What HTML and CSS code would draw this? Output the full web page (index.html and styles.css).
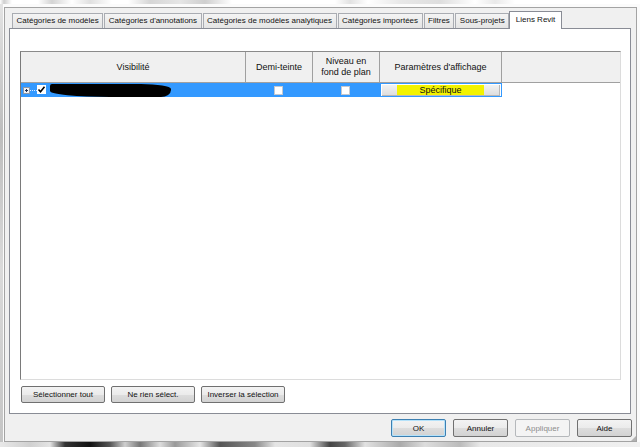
FILE: index.html
```html
<!DOCTYPE html>
<html lang="fr">
<head>
    <meta charset="UTF-8">
    <title>Visibilité/Graphismes - Liens Revit</title>
    <link rel="stylesheet" href="styles.css">
</head>
<body>
    <div class="backdrop-top"></div>

    <div class="dialog">
        <div class="tabs">
            <div class="tab">Catégories de modèles</div>
            <div class="tab">Catégories d'annotations</div>
            <div class="tab">Catégories de modèles analytiques</div>
            <div class="tab">Catégories importées</div>
            <div class="tab">Filtres</div>
            <div class="tab">Sous-projets</div>
            <div class="tab active">Liens Revit</div>
        </div>

        <div class="tab-panel">
            <div class="grid">
                <div class="grid-head">
                    <div class="hcell">Visibilité</div>
                    <div class="hcell">Demi-teinte</div>
                    <div class="hcell">Niveau en<br>fond de plan</div>
                    <div class="hcell">Paramètres d'affichage</div>
                    <div class="hcell last"></div>
                </div>
                <div class="grid-row">
                    <div class="cell cell-name selected">
                        <svg class="expander" width="7" height="7" viewBox="0 0 7 7">
                            <rect x="0.5" y="0.5" width="6" height="6" fill="#eef0f4" stroke="#8e99a8"/>
                            <path d="M2 3.5h3M3.5 2v3" stroke="#1f2f4f"/>
                        </svg>
                        <span class="tree-line"></span>
                        <svg class="check" width="9" height="9" viewBox="0 0 9 9">
                            <rect x="0" y="0" width="9" height="9" fill="#fff"/>
                            <path d="M1.5 4.5l2 2.2 4-5" fill="none" stroke="#000" stroke-width="1.6"/>
                        </svg>
                        <span class="redacted"></span>
                    </div>
                    <div class="cell cell-box selected"><span class="box"></span></div>
                    <div class="cell cell-box selected"><span class="box"></span></div>
                    <div class="cell cell-param">
                        <div class="param-btn"><span class="marker">Spécifique</span></div>
                    </div>
                    <div class="cell"></div>
                </div>
            </div>

            <div class="panel-buttons">
                <button class="btn">Sélectionner tout</button>
                <button class="btn">Ne rien sélect.</button>
                <button class="btn">Inverser la sélection</button>
            </div>
        </div>

        <div class="dialog-buttons">
            <button class="btn btn-default">OK</button>
            <button class="btn">Annuler</button>
            <button class="btn" disabled>Appliquer</button>
            <button class="btn">Aide</button>
        </div>
        <span class="grip"></span>
    </div>

    <div class="backdrop-bottom"></div>
</body>
</html>
```

FILE: styles.css
```css
html, body {
    margin: 0;
    padding: 0;
}
body {
    width: 640px;
    height: 447px;
    overflow: hidden;
    font-family: "Liberation Sans", Arial, sans-serif;
    font-size: 8px;
    color: #111;
    background: linear-gradient(to bottom, #e4e4e4, #bdbdbd 30%, #dadada 60%, #c4c4c4) 0 0 / 3px 100% no-repeat, #fbfbfb;
}

/* blurred desktop behind the dialog */
.backdrop-top {
    height: 7px;
    background:
        linear-gradient(to right, #fff 0, #cfcfcf 4px, #fff 12px, #fff 38px, #d4d4d4 52px, #fff 72px,
            #e0e0e0 90px, #fff 112px, #fff 128px, #d6d6d6 150px, #e6e6e6 180px, #cfcfcf 205px, #fff 232px,
            #fff 335px, #e2e2e2 350px, #fff 368px, #e8e8e8 400px, #dedede 440px, #fff 475px, #e9e9e9 495px, #fff 515px)
        0 0 / 100% 4px no-repeat;
}
.backdrop-bottom {
    height: 6px;
    background: linear-gradient(to right, #e8e8e8 0, #d0d0d0 30px, #e4e4e4 50px, #333 65px, #111 90px, #555 110px,
        #cfcfcf 125px, #777 140px, #ddd 160px, #999 175px, #e5e5e5 200px, #555 220px, #888 255px, #e5e5e5 275px,
        #e0e0e0 310px, #444 330px, #666 345px, #e2e2e2 365px, #aaa 400px, #ddd 425px, #bbb 460px, #e8e8e8 480px, #f0f0f0 640px);
}

.dialog {
    position: relative;
    box-sizing: border-box;
    width: 633px;
    height: 435px;
    margin-left: 4px;
    padding: 3px 5px 0 4px;
    background: #f0f0f0;
    border: 1px solid #a3a3a3;
}

/* tab strip */
.tabs {
    display: flex;
    align-items: flex-end;
    height: 17px;
    margin-left: 3px;
}
.tab {
    box-sizing: border-box;
    height: 15px;
    padding: 0 3.5px;
    line-height: 14px;
    white-space: nowrap;
    border: 1px solid #a9acb2;
    border-bottom: none;
    background: linear-gradient(#f4f4f4, #e4e4e4);
}
.tab + .tab { margin-left: 1px; }
.tab.active {
    position: relative;
    z-index: 1;
    height: 18px;
    margin-bottom: -1px;
    margin-left: 0;
    padding: 0 5.5px;
    line-height: 16px;
    background: #fff;
    border-color: #898c95;
}

.tab-panel {
    box-sizing: border-box;
    height: 386px;
    padding: 22px 9px 0 10px;
    background: #fff;
    border: 1px solid #898c95;
}

/* data grid */
.grid {
    box-sizing: border-box;
    width: 601px;
    height: 329px;
    background: #fff;
    border: 1px solid #dcdcdc;
    border-top-color: #8a8a8a;
    border-left-color: #7a7a7a;
}
.grid-head,
.grid-row {
    display: grid;
    grid-template-columns: 225px 67px 67px 122px 1fr;
    font-size: 9px;
}
.grid-head {
    height: 31px;
    background: #f0f0f0;
    border-bottom: 1px solid #a0a0a0;
    box-sizing: border-box;
}
.hcell {
    display: flex;
    align-items: center;
    justify-content: center;
    text-align: center;
    line-height: 11px;
    border-right: 1px solid #a0a0a0;
}
.hcell.last { border-right: none; }

.grid-row { height: 13px; }
.cell {
    box-sizing: border-box;
    display: flex;
    align-items: center;
}
.cell.selected { background: #3399ff; }
.cell-name { padding-left: 2px; }
.expander { flex: none; }
.tree-line {
    width: 7px;
    border-top: 1px dotted #dbe9ff;
}
.check { flex: none; margin-top: -1px; }
.redacted {
    align-self: flex-start;
    width: 121px;
    height: 13px;
    margin: 1px 0 0 4px;
    background: #000;
    border-radius: 2px 30px 10px 60px / 2px 5px 7px 6px;
}
.cell-box { justify-content: center; }
.box {
    box-sizing: border-box;
    width: 9px;
    height: 9px;
    margin-left: -3px;
    background: #fff;
    border: 1px solid #c4c8cf;
}
.cell-param {
    padding: 0 1px;
    border: 1px solid #3399ff;
}
.param-btn {
    box-sizing: border-box;
    width: 100%;
    height: 11px;
    display: flex;
    justify-content: center;
    align-items: center;
    background: linear-gradient(#f2f2f2, #dedede);
    border-right: 1px solid #b8b8b8;
    border-bottom: 1px solid #b8b8b8;
}
.marker {
    padding: 0 22px;
    line-height: 10px;
    background: #f3f300;
}

/* buttons */
.btn {
    box-sizing: border-box;
    height: 17px;
    padding: 0;
    font-family: inherit;
    font-size: 8px;
    color: #111;
    border: 1px solid #707070;
    border-radius: 2px;
    background: linear-gradient(#f3f3f3 0%, #ebebeb 50%, #dddddd 51%, #d2d2d2 100%);
}
.btn:disabled {
    color: #8c8c8c;
    border-color: #b5b8bb;
    background: #f4f4f4;
}
.btn-default {
    border-color: #3c7fb1;
    box-shadow: inset 0 0 0 1px #b5e2fa;
}
.panel-buttons {
    display: flex;
    gap: 6px;
    margin: 6px 0 0 1px;
}
.panel-buttons .btn { width: 84px; }

.dialog-buttons {
    display: flex;
    justify-content: flex-end;
    gap: 7px;
    margin: 5px -1px 0 0;
}
.dialog-buttons .btn {
    width: 55px;
    height: 18px;
}

.grip {
    position: absolute;
    right: 0;
    bottom: 0;
    width: 5px;
    height: 5px;
    background: radial-gradient(circle, #9a9a9a 0.6px, transparent 1px) 0 0 / 2px 2px;
    clip-path: polygon(100% 0, 100% 100%, 0 100%);
}
```
